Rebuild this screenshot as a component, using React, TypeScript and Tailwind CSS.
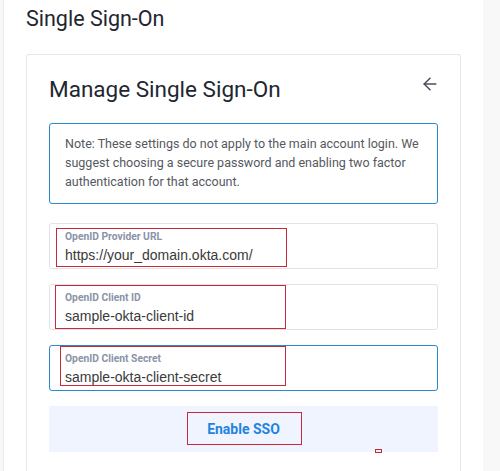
import React from 'react'
import { ArrowLeft } from 'lucide-react'

const Field: React.FC<{ label: string; value: string; active?: boolean; mark: string }> = ({
  label,
  value,
  active,
  mark,
}) => (
  <div
    className={`relative h-[46px] rounded-[3px] border bg-white px-[15px] pt-[7px] ${
      active ? 'border-[#2a88cf]' : 'border-[#e3e3e3]'
    }`}
  >
    <div className="text-[10.3px] leading-[12px] font-bold text-[#8a93a8]">{label}</div>
    <div className="mt-[3px] font-['Liberation_Sans',Arial,sans-serif] text-[14px] leading-[18px] text-[#3a3a3a]">
      {value}
    </div>
    {/* review annotation */}
    <span className={`pointer-events-none absolute border border-[#c8283c] ${mark}`} />
  </div>
)

export default function App() {
  return (
    <div className="flex h-[471px] w-[500px] overflow-hidden bg-[#f8f8f8] font-['Roboto',sans-serif]">
      <div className="ml-[3px] w-[480px] border-l border-[#ececec] bg-white pl-[22px]">
        <h1 className="mt-[5px] text-[21.5px] leading-[28px] text-[#222630]">Single Sign-On</h1>

        <div className="mt-[21px] w-[435px] rounded-t-[3px] border border-b-0 border-[#e6e6e6] px-[22px] pt-[19px] pb-[20px]">
          <div className="flex items-center justify-between">
            <h2 className="text-[22.5px] leading-[30px] text-[#222630]">Manage Single Sign-On</h2>
            <ArrowLeft className="mt-[-10px] mr-[-2px] h-[20px] w-[20px] text-[#4a4f5c]" strokeWidth={1.8} />
          </div>

          <div className="mt-[19px] rounded-[3px] border border-[#2a88cf] pt-[10px] pb-[12px] pr-[10px] pl-[15px] text-[12.5px] leading-[19px] text-[#55585f]">
            Note: These settings do not apply to the main account login. We suggest choosing a secure
            password and enabling two factor authentication for that account.
          </div>

          <div className="mt-[19px] flex flex-col gap-[15px]">
            <Field
              label="OpenID Provider URL"
              value="https://your_domain.okta.com/"
              mark="top-[4px] left-[6px] h-[39px] w-[231px]"
            />
            <Field
              label="OpenID Client ID"
              value="sample-okta-client-id"
              mark="top-[0px] left-[5px] h-[44px] w-[231px]"
            />
            <Field
              label="OpenID Client Secret"
              value="sample-okta-client-secret"
              active
              mark="top-[0px] left-[10px] h-[40px] w-[226px]"
            />
          </div>

          <div className="relative mt-[15px] flex h-[46px] items-center justify-center bg-[#f0f4ff]">
            <span className="relative px-[20px] py-[6px] text-[14px] font-bold text-[#1f84e0]">
              Enable SSO
              <span className="pointer-events-none absolute top-[-1px] left-[0px] h-[33px] w-[115px] border border-[#c8283c]" />
            </span>
            <span className="absolute top-[43px] left-[326px] h-[4px] w-[7px] border border-[#c8283c]" />
          </div>
        </div>
      </div>
    </div>
  )
}
